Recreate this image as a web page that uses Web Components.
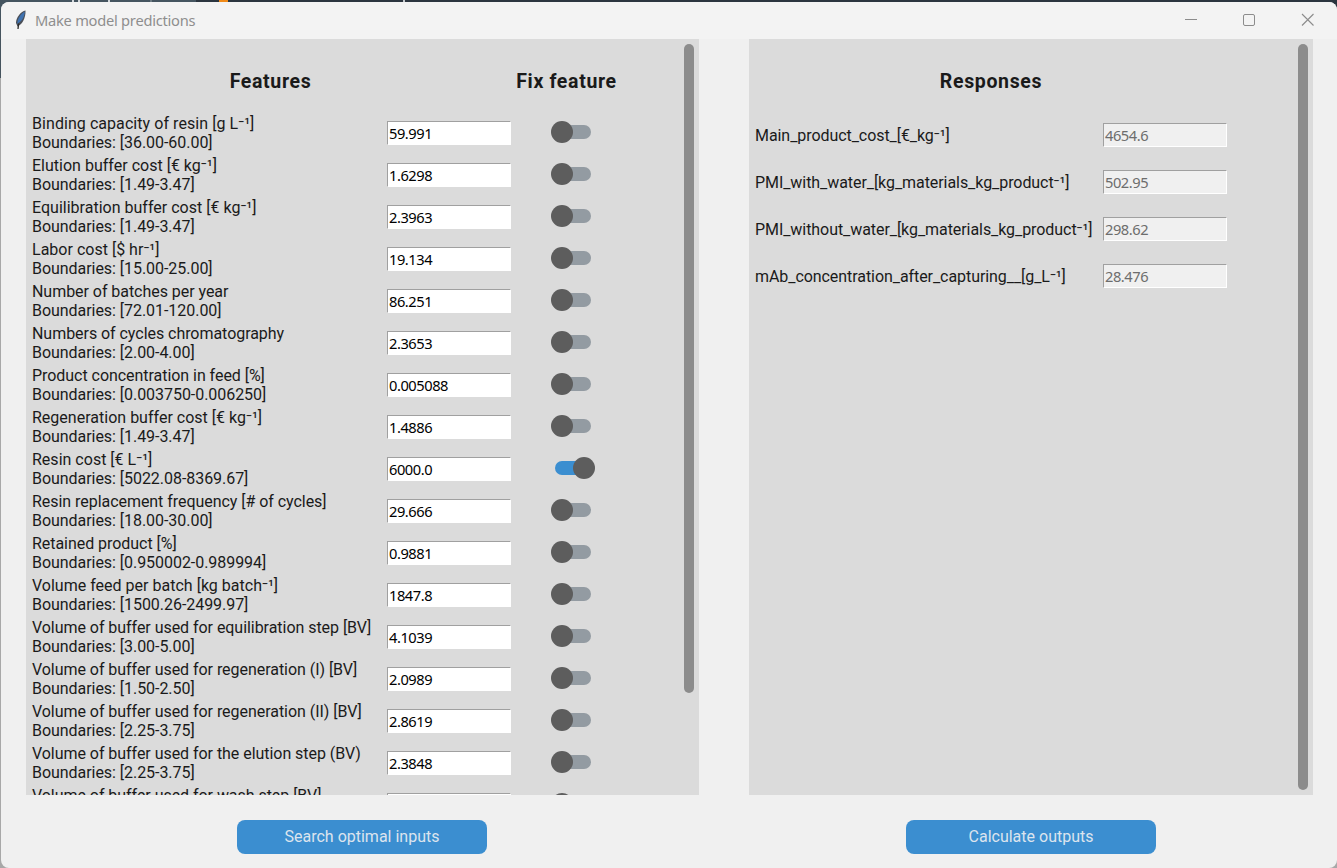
<!DOCTYPE html>
<html lang="en">
<head>
<meta charset="utf-8">
<title>Make model predictions</title>
<style>
html,body{margin:0;height:100%;overflow:hidden}
body{font-family:Roboto,"Noto Sans",sans-serif;color:#1a1a1a}
</style>
</head>
<body>
<prediction-app></prediction-app>
<script>
const define = (name, html, setup) => {
  const template = document.createElement('template');
  template.innerHTML = html;
  customElements.define(name, class extends HTMLElement {
    constructor() {
      super();
      this.attachShadow({ mode: 'open' }).append(template.content.cloneNode(true));
    }
    connectedCallback() { if (setup) setup(this, this.shadowRoot); }
  });
};

define('title-bar', `
<style>
:host{display:flex;align-items:center;height:37px;background:#f3f3f3;box-sizing:border-box;padding:0 0 1px 13px}
.icon{width:14px;height:22px;margin-right:7px}
.title{font:14.67px/20px "Noto Sans",sans-serif;letter-spacing:-.25px;color:#8e8e8e;flex:1;white-space:nowrap;padding-bottom:1px}
.controls{display:flex}
.controls svg{width:58.5px;height:36px;display:block}
</style>
<svg class="icon" viewBox="0 0 14 22"><path d="M11.500 1.500C7 2.500 2 8 2 14L3.500 17.500C8 15.500 11.800 9.500 11.500 1.500Z" fill="#4b4f57"/><path d="M10.800 2.500C6.500 5 3.400 9.500 3.200 15C8 12 10.600 8 10.800 2.500Z" fill="#3f72b0"/><path d="M4.600 14.500L4 20" fill="none" stroke="#2c2c2c" stroke-width="1.300"/></svg>
<span class="title"><slot></slot></span>
<div class="controls">
<svg viewBox="0 0 58.500 36"><path d="M23 17.500H35" stroke="#8c8c8c"/></svg>
<svg viewBox="0 0 58.500 36"><rect x="23.500" y="12.500" width="11" height="11" rx="1.500" fill="none" stroke="#8c8c8c"/></svg>
<svg viewBox="0 0 58.500 36"><path d="M23 12L34.500 23.500M34.500 12L23 23.500" stroke="#8c8c8c" stroke-width="1.100"/></svg>
</div>`);

define('value-entry', `
<style>
:host{display:block;box-sizing:border-box;width:124px;height:24px;background:#fff;border:1px solid #fff;border-top-color:#a0a0a0;border-left-color:#a0a0a0;padding-left:1px;font:14.67px/22px "Noto Sans",sans-serif;letter-spacing:-.45px;color:#000;white-space:nowrap;overflow:hidden}
:host([disabled]){background:#f0f0f0;color:#6d6d6d}
</style><slot></slot>`);

define('toggle-switch', `
<style>
:host{display:flex;align-items:center;width:44px;height:22px}
.track{width:36px;height:14px;border-radius:7px;background:#939ba2;margin-left:4px;display:flex;align-items:center}
.knob{flex:none;width:22px;height:22px;border-radius:50%;background:#5d5d5d;margin-left:-4px}
:host([on]) .track{background:#3b8ed0}
:host([on]) .knob{margin-left:18px}
</style><div class="track"><div class="knob"></div></div>`);

define('feature-row', `
<style>
:host{display:grid;grid-template-columns:355px 164px 44px;height:42px;box-sizing:border-box}
.label{font-size:16px;line-height:19px;padding-top:2px;white-space:nowrap;letter-spacing:-.045px}
.name.unit{letter-spacing:.01px}
:host(:first-child) .name{letter-spacing:.06px}
value-entry{margin-top:9px}
toggle-switch{margin-top:9px}
</style>
<div class="label"><div class="name"></div><div class="bounds"></div></div>
<value-entry></value-entry><toggle-switch></toggle-switch>`, (el, root) => {
  const bounds = el.getAttribute('bounds');
  const name = root.querySelector('.name');
  name.textContent = el.getAttribute('name');
  name.classList.toggle('unit', name.textContent.includes('⁻¹'));
  root.querySelector('.bounds').textContent = bounds ? 'Boundaries: [' + bounds + ']' : '';
  root.querySelector('value-entry').textContent = el.getAttribute('value');
  root.querySelector('toggle-switch').toggleAttribute('on', el.hasAttribute('fixed'));
});

define('response-row', `
<style>
:host{display:grid;grid-template-columns:348px 124px;height:47px;align-items:center}
.label{font-size:16px;line-height:19px;white-space:nowrap;letter-spacing:-.065px}
value-entry{margin-bottom:1px}
</style>
<div class="label"><slot></slot></div><value-entry disabled></value-entry>`, (el, root) => {
  root.querySelector('value-entry').textContent = el.getAttribute('value');
});

define('scroll-panel', `
<style>
:host{display:flex;height:756px;background:#dbdbdb;overflow:hidden}
.content{flex:1;min-width:0;padding-left:6px;overflow:hidden}
.bar{flex:none;width:10px;height:var(--thumb,746px);margin:5px 5px 0 0;border-radius:5px;background:#8c8c8c}
</style><div class="content"><slot></slot></div><div class="bar"></div>`);

define('action-button', `
<style>
:host{display:block;width:250px;height:34px;border-radius:8px;background:#3b8ed0;color:#dce4ee;font-size:16px;line-height:33px;text-align:center}
</style><slot></slot>`);

define('prediction-app', `
<style>
:host{display:block;width:1337px;height:868px;box-sizing:border-box;padding:2px 0 0 1px;background:linear-gradient(90deg,#455560 0 196px,#2b353f 196px) 0 0/100% 20px no-repeat,linear-gradient(#46545e 0 78px,#a8a8a8 78px)}
.window{position:relative;height:866px;border-radius:8px;background:#f0f0f0;overflow:hidden}
.backdrop{position:absolute;left:0;top:0;width:420px;height:2px;background:linear-gradient(90deg,transparent 72px,#d5dade 72px 74px,transparent 74px 78px,#d5dade 78px 80px,transparent 80px 108px,#d5dade 108px 110px,transparent 110px 150px,#6d7a83 150px 152px,transparent 152px 219px,#f08a18 219px 228px,transparent 228px 403px,#c5cacd 403px 405px,transparent 405px)}
.main{display:grid;grid-template-columns:673px 564px;column-gap:50px;padding-left:25px}
h2{margin:0;font-size:19.5px;line-height:24px;font-weight:700;letter-spacing:.65px;white-space:nowrap}
.heads{display:grid;grid-template-columns:477px 115px;text-align:center;padding-top:31px;height:42px}
.response-head{padding-top:31px;height:42px;width:472px;text-align:center}
action-button{justify-self:center;margin-top:25px}
.search{margin-right:1px}
</style>
<div class="backdrop"></div>
<div class="window">
<title-bar>Make model predictions</title-bar>
<div class="main">
<scroll-panel style="--thumb:649px"><div class="heads"><h2>Features</h2><h2>Fix feature</h2></div><div class="features"></div></scroll-panel>
<scroll-panel><div class="response-head"><h2>Responses</h2></div><div class="responses"></div></scroll-panel>
<action-button class="search">Search optimal inputs</action-button>
<action-button class="calculate">Calculate outputs</action-button>
</div></div>`, (el, root) => {
  const features = [
    ['Binding capacity of resin [g L⁻¹]', '36.00-60.00', '59.991'],
    ['Elution buffer cost [€ kg⁻¹]', '1.49-3.47', '1.6298'],
    ['Equilibration buffer cost [€ kg⁻¹]', '1.49-3.47', '2.3963'],
    ['Labor cost [$ hr⁻¹]', '15.00-25.00', '19.134'],
    ['Number of batches per year', '72.01-120.00', '86.251'],
    ['Numbers of cycles chromatography', '2.00-4.00', '2.3653'],
    ['Product concentration in feed [%]', '0.003750-0.006250', '0.005088'],
    ['Regeneration buffer cost [€ kg⁻¹]', '1.49-3.47', '1.4886'],
    ['Resin cost [€ L⁻¹]', '5022.08-8369.67', '6000.0', true],
    ['Resin replacement frequency [# of cycles]', '18.00-30.00', '29.666'],
    ['Retained product [%]', '0.950002-0.989994', '0.9881'],
    ['Volume feed per batch [kg batch⁻¹]', '1500.26-2499.97', '1847.8'],
    ['Volume of buffer used for equilibration step [BV]', '3.00-5.00', '4.1039'],
    ['Volume of buffer used for regeneration (I) [BV]', '1.50-2.50', '2.0989'],
    ['Volume of buffer used for regeneration (II) [BV]', '2.25-3.75', '2.8619'],
    ['Volume of buffer used for the elution step (BV)', '2.25-3.75', '2.3848'],
    ['Volume of buffer used for wash step [BV]', '', '']
  ];
  for (const [name, bounds, value, fixed] of features) {
    const row = document.createElement('feature-row');
    row.setAttribute('name', name);
    row.setAttribute('bounds', bounds);
    row.setAttribute('value', value);
    if (fixed) row.setAttribute('fixed', '');
    root.querySelector('.features').append(row);
  }
  const responses = [
    ['Main_product_cost_[€_kg⁻¹]', '4654.6'],
    ['PMI_with_water_[kg_materials_kg_product⁻¹]', '502.95'],
    ['PMI_without_water_[kg_materials_kg_product⁻¹]', '298.62'],
    ['mAb_concentration_after_capturing__[g_L⁻¹]', '28.476']
  ];
  for (const [name, value] of responses) {
    const row = document.createElement('response-row');
    row.textContent = name;
    row.setAttribute('value', value);
    root.querySelector('.responses').append(row);
  }
});
</script>
</body>
</html>
